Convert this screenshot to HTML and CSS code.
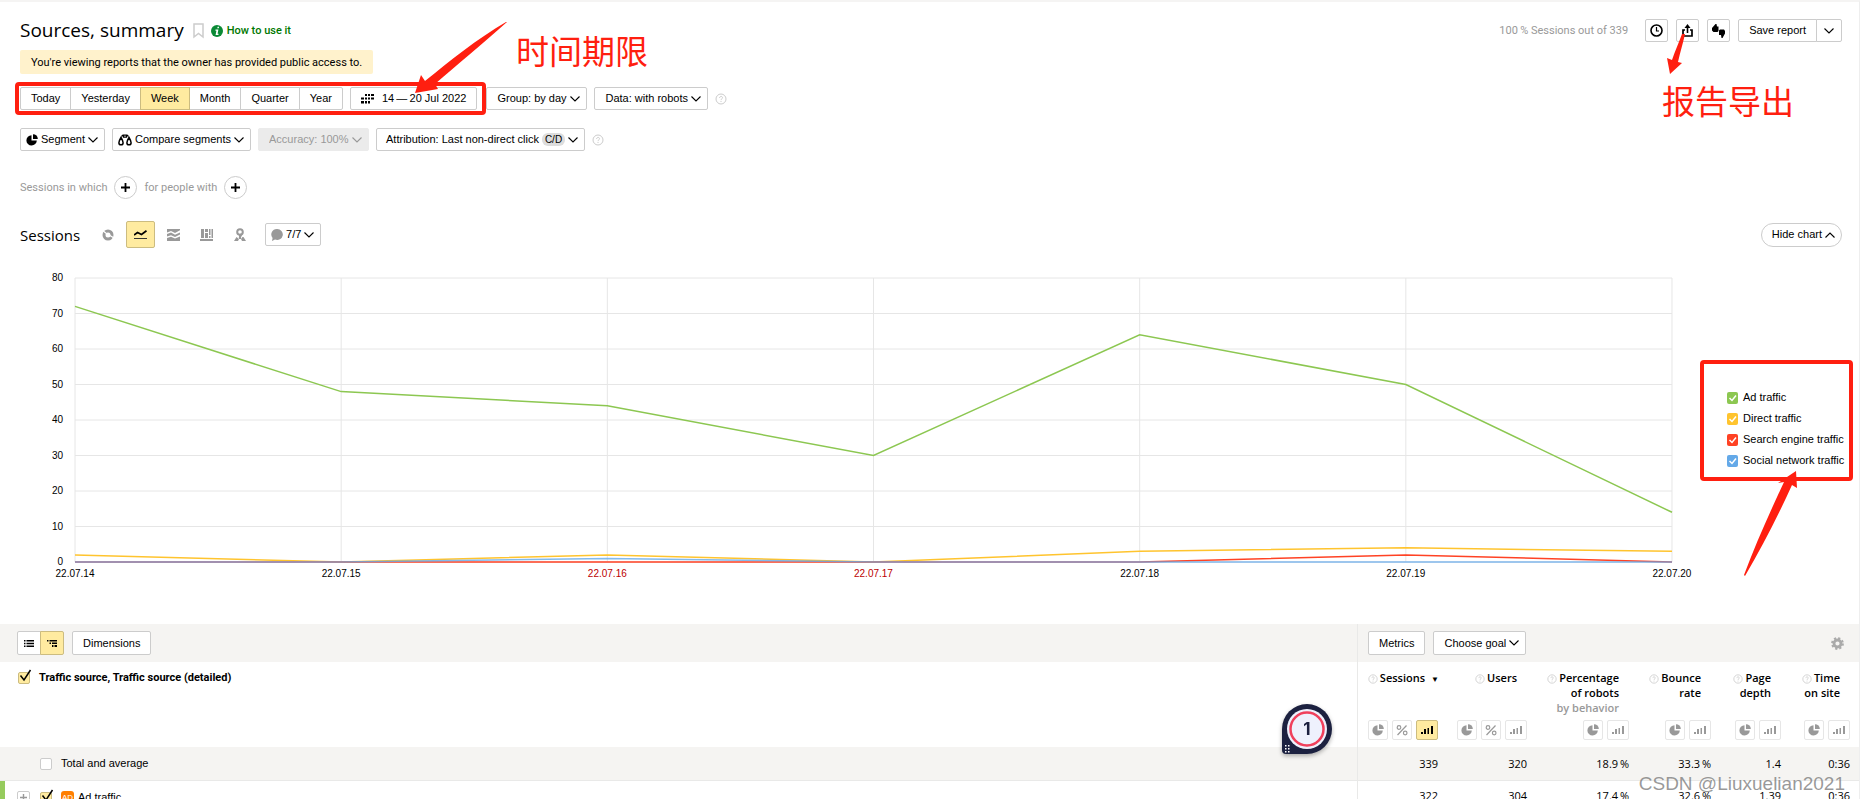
FILE: index.html
```html
<!DOCTYPE html>
<html lang="en">
<head>
  <meta charset="utf-8">
  <title>Sources, summary</title>
  <link rel="stylesheet" href="styles.css">
</head>
<body>
  <!-- Shared icons -->
  <svg class="sprite" aria-hidden="true">
    <symbol id="i-chevron" viewBox="0 0 10 6"><path d="M.5.5 5 5 9.500.5" fill="none" stroke="currentColor" stroke-width="1.100"/></symbol>
    <symbol id="i-help" viewBox="0 0 12 12"><circle cx="6" cy="6" r="5" fill="none" stroke="currentColor"/><path d="M4.600 4.900c0-2 2.900-1.900 2.900-.2C7.500 5.900 6 5.900 6 7.100M6 8v1" fill="none" stroke="currentColor"/></symbol>
    <symbol id="i-pie" viewBox="0 0 12 12"><path d="M5.500 1.200V6.500H10.800A5.200 5.200 0 1 1 5.500 1.200Z" fill="currentColor"/><path d="M7 .2A4.800 4.800 0 0 1 11.800 5H7Z" fill="currentColor"/></symbol>
    <symbol id="i-percent" viewBox="0 0 12 12"><path d="M10.500 1.500 1.500 11" fill="none" stroke="currentColor" stroke-width="1.200"/><circle cx="3" cy="3.500" r="1.800" fill="none" stroke="currentColor" stroke-width="1.200"/><circle cx="9.200" cy="9" r="1.800" fill="none" stroke="currentColor" stroke-width="1.200"/></symbol>
    <symbol id="i-bars" viewBox="0 0 12 12"><path d="M0 8h2v2H0zM3 5h2v5H3zM6.500 4h1.500v6H6.500zM10 2h2v8h-2z" fill="currentColor"/></symbol>
    <symbol id="i-plus" viewBox="0 0 10 10"><path d="M5 0v10M0 5h10" stroke="currentColor" stroke-width="2"/></symbol>
  </svg>

  <div class="page">
    <header class="header">
      <h1>Sources, summary</h1>
      <svg class="bookmark" viewBox="0 0 11 16"><path d="M1 1h9v13L5.500 10.500 1 14Z" fill="none" stroke="#ccc" stroke-width="1.500"/></svg>
      <a class="how-to" href="#">
        <svg width="12" height="12" viewBox="0 0 12 12"><circle cx="6" cy="6" r="6" fill="#0a8a35"/><path d="M6.600 1.800h1.500L7.800 3.300H6.300zM4.500 4.400h2.900L6.600 8.800h1L7.400 10H4.600l.8-4.300h-1z" fill="#fff"/></svg>
        How to use it
      </a>
      <div class="header-right">
        <span class="sampling">100&thinsp;% Sessions out of 339</span>
        <button class="btn icon-btn" aria-label="History"><svg width="13" height="13" viewBox="0 0 13 13"><circle cx="6.500" cy="6.500" r="5.500" fill="none" stroke="#000" stroke-width="1.600"/><path d="M6.500 3v4H9" fill="none" stroke="#000" stroke-width="1.200"/></svg></button>
        <button class="btn icon-btn" aria-label="Export"><svg width="11" height="13" viewBox="0 0 11 13"><path d="M3 6H1v6h9V6H8" fill="none" stroke="#000" stroke-width="1.700"/><path d="M5.500 9V2" stroke="#000" stroke-width="1.600"/><path d="M2.500 4 5.500 0l3 4z"/></svg></button>
        <button class="btn icon-btn" aria-label="Feedback"><svg width="14" height="14" viewBox="0 0 14 14"><path d="M3.500 0 4.500 0 5 2.500H6.500V7L5.500 8H1.500L0 6.500V4ZM10.500 14 9.500 14 9 11H7V6.500L8 5.500H12L13 7V9.500Z"/></svg></button>
        <div class="btn-group">
          <button class="btn">Save report</button><button class="btn arrow-btn" aria-label="More save options"><svg class="chevron"><use href="#i-chevron"/></svg></button>
        </div>
      </div>

      <div class="note-export">
        <svg width="20" height="41" viewBox="0 0 20 41"><path d="M19 0 17 0C14 8 10 17 7 26L2 24 5 40 17 29 13 28C15 19 18 9 20 0Z"/></svg>
        <span>报告导出</span>
      </div>
    </header>

    <p class="notice">You're viewing reports that the owner has provided public access to.</p>

    <div class="toolbar">
      <div class="btn-group">
        <button class="btn">Today</button><button class="btn">Yesterday</button><button class="btn active">Week</button><button class="btn">Month</button><button class="btn">Quarter</button><button class="btn">Year</button>
      </div>
      <button class="btn date">
        <svg width="13" height="10" viewBox="0 0 13 10"><path d="M4 0h2v2H4zM7 0h2v2H7zM10 0h3v2h-3zM0 3.500h3v2H0zM4 3.500h2v2H4zM7 3.500h2v2H7zM10 3.500h3v2h-3zM0 7h3v2.500H0zM4 7h2v2.500H4zM7 7h2v2.500H7z"/></svg>
        14&thinsp;—&thinsp;20 Jul 2022
      </button>
      <select class="btn select" aria-label="Group"><option>Group: by day</option></select>
      <select class="btn select" aria-label="Data"><option>Data: with robots</option></select>
      <svg class="help"><use href="#i-help"/></svg>

      <div class="note-frame"></div>
      <svg class="note-arrow" width="93" height="73" viewBox="0 0 93 73"><path d="M92 0C66 23 42 43 20 62L23 67 0 71 6 53 10 59C36 38 62 17 91 0Z"/></svg>
      <span class="note-period">时间期限</span>
    </div>

    <div class="toolbar second">
      <button class="btn with-icon"><svg width="12" height="12"><use href="#i-pie"/></svg>Segment<svg class="chevron"><use href="#i-chevron"/></svg></button>
      <button class="btn with-icon"><svg width="14" height="12" viewBox="0 0 14 12"><path d="M3 3.500C1.500 6 .9 7.300.9 8.700a2.100 2.100 0 0 0 4.200 0C5.100 7.300 4.500 6 3 3.500ZM11 3.500C9.500 6 8.900 7.300 8.900 8.700a2.100 2.100 0 0 0 4.200 0C13.100 7.300 12.500 6 11 3.500Z" fill="none" stroke="#000" stroke-width="1.500"/><path d="M3.500 2.500 5 1M9 1l1.500 1.500M5.500 1.200h3v2h-3z" fill="none" stroke="#000" stroke-width="1.200"/></svg>Compare segments<svg class="chevron"><use href="#i-chevron"/></svg></button>
      <select class="btn select" aria-label="Accuracy" disabled><option>Accuracy: 100%</option></select>
      <button class="btn attribution">Attribution: Last non-direct click<span class="tag">C/D</span><svg class="chevron"><use href="#i-chevron"/></svg></button>
      <svg class="help"><use href="#i-help"/></svg>
    </div>

    <div class="filters">
      <span>Sessions in which</span>
      <button class="round" aria-label="Add session condition"><svg><use href="#i-plus"/></svg></button>
      <span>for people with</span>
      <button class="round" aria-label="Add people condition"><svg><use href="#i-plus"/></svg></button>
    </div>

    <div class="chart-head">
      <h2>Sessions</h2>
      <div class="chart-types">
        <button aria-label="Pie"><svg width="12" height="12" viewBox="0 0 12 12"><circle cx="6" cy="6" r="4" fill="none" stroke="#999" stroke-width="3"/><path d="M5 5 0 1M7 6l5 3" stroke="#fff" stroke-width="1.200"/></svg></button>
        <button class="active" aria-label="Lines"><svg width="13" height="10" viewBox="0 0 13 10"><path d="M0 5 3.500 2.500 7.500 4.500 12.500.8" fill="none" stroke="#000" stroke-width="1.700"/><path d="M0 8.500h13" stroke="#333"/></svg></button>
        <button aria-label="Areas"><svg width="13" height="12" viewBox="0 0 13 12"><path d="M0 0h13v1.200L8 4 4 2 0 3.500ZM0 5 4 3.500 8 5.700 13 3.500V5.500L8 8 4 6.200 0 7.500ZM0 9 4 7.700 8 9.500 13 7.500V12H0Z" fill="#999"/></svg></button>
        <button aria-label="Columns"><svg width="13" height="12" viewBox="0 0 13 12"><path d="M1 0h3v9H1zM5 0h3v3H5zM5 4h3v5H5zM9 0h1.500v6H9zM9 7h1.500v2H9zM11.500 0H13v9h-1.500zM0 10h13v2H0z" fill="#999"/></svg></button>
        <button aria-label="Map"><svg width="12" height="13" viewBox="0 0 12 13"><path d="M6 4.500V11" stroke="#999" stroke-width="2"/><circle cx="6" cy="4" r="2.800" fill="#fff" stroke="#999" stroke-width="2"/><path d="M7.500 6 5.500 10" stroke="#999" stroke-width="2"/><path d="M2.500 9 0 13h4l1-2ZM8.500 9 7 11 8 13h4L9.500 9Z" fill="#999"/></svg></button>
      </div>
      <button class="btn with-icon notes-btn"><svg width="12" height="12" viewBox="0 0 12 12"><path d="M6 0a5.700 5.500 0 1 1-2 10.600L1 12l.6-3A5.600 5.500 0 0 1 6 0Z" fill="#999"/></svg>7/7<svg class="chevron"><use href="#i-chevron"/></svg></button>
      <button class="hide-chart">Hide chart<svg class="chevron up"><use href="#i-chevron"/></svg></button>
    </div>

    <div class="chart">
      <div class="y-axis">
        <span>80</span><span>70</span><span>60</span><span>50</span><span>40</span><span>30</span><span>20</span><span>10</span><span>0</span>
      </div>
      <div class="plot">
        <!-- x: day number, y: 80 minus sessions -->
        <svg viewBox="0 0 6 80" preserveAspectRatio="none">
          <path class="grid" d="M0 0H6M0 10H6M0 20H6M0 30H6M0 40H6M0 50H6M0 60H6M0 70H6M0 80H6M0 0V80M1 0V80M2 0V80M3 0V80M4 0V80M5 0V80M6 0V80"/>
          <polyline class="ad" points="0,8 1,32 2,36 3,50 4,16 5,30 6,66"/>
          <polyline class="direct" points="0,78 1,80 2,78 3,80 4,77 5,76 6,77"/>
          <polyline class="search" points="0,80 1,80 2,80 3,80 4,80 5,78 6,80"/>
          <polyline class="social" points="0,80 1,80 2,79 3,80 4,80 5,80 6,80"/>
        </svg>
        <div class="x-axis">
          <span>22.07.14</span><span>22.07.15</span><span class="weekend">22.07.16</span><span class="weekend">22.07.17</span><span>22.07.18</span><span>22.07.19</span><span>22.07.20</span>
        </div>
      </div>
      <div class="legend">
        <label class="c-ad"><input type="checkbox" checked>Ad traffic</label>
        <label class="c-direct"><input type="checkbox" checked>Direct traffic</label>
        <label class="c-search"><input type="checkbox" checked>Search engine traffic</label>
        <label class="c-social"><input type="checkbox" checked>Social network traffic</label>
        <svg class="legend-arrow" width="54" height="106" viewBox="0 0 54 106"><path d="M0 104C12 72 26 41 40 11L34 12 52 0 53 17 48 14C34 45 18 76 1 105Z"/></svg>
      </div>
    </div>

    <div class="table-bar">
      <div class="bar-left">
        <div class="btn-group">
          <button class="btn view-btn" aria-label="List"><svg width="10" height="7" viewBox="0 0 10 7"><path d="M0 0h1.500v1.500H0zM2.500 0H10v1.500H2.500zM0 2.700h1.500v1.500H0zM2.500 2.700H10v1.500H2.500zM0 5.400h1.500V7H0zM2.500 5.400H10V7H2.500z"/></svg></button><button class="btn view-btn active" aria-label="Tree"><svg width="10" height="7" viewBox="0 0 10 7"><path d="M0 0h1.500v1.500H0zM2.500 0H10v1.500H2.500zM2.500 2.500h1.500V4H2.500zM5 2.500h5V4H5zM5 5h1.500v2H5zM7.500 5H10v2H7.500z"/></svg></button>
        </div>
        <button class="btn">Dimensions</button>
      </div>
      <div class="bar-right">
        <button class="btn">Metrics</button>
        <select class="btn select" aria-label="Goal"><option>Choose goal</option></select>
        <button class="gear" aria-label="Settings"><svg width="13" height="13" viewBox="0 0 13 13"><circle cx="6.500" cy="6.500" r="3.500" fill="none" stroke="#aaa" stroke-width="2.800"/><circle cx="6.500" cy="6.500" r="5.400" fill="none" stroke="#aaa" stroke-width="2" stroke-dasharray="2.200 2.040"/></svg></button>
      </div>
      <svg class="recorder" width="60" height="60" viewBox="0 0 60 60">
        <path d="M30 5A25 25 0 1 1 30 55H9a4 4 0 0 1-4-4V30A25 25 0 0 1 30 5Z" fill="#1c2140"/>
        <circle cx="30" cy="30" r="20" fill="#eef1fd"/>
        <circle cx="30" cy="30" r="16.500" fill="none" stroke="#f0405c" stroke-width="2.500"/>
        <path d="M8 46h1.500v1.500H8zM11 46h1.500v1.500H11zM8 49h1.500v1.500H8zM11 49h1.500v1.500H11zM8 52h1.500v1.500H8zM11 52h1.500v1.500H11z" fill="#fff"/>
        <text x="30" y="36" text-anchor="middle">1</text>
      </svg>
    </div>

    <table>
      <colgroup>
        <col><col class="w-sessions"><col class="w-users"><col class="w-robots"><col class="w-bounce"><col class="w-depth"><col class="w-time">
      </colgroup>
      <thead>
        <tr class="titles">
          <th class="source"><label><input type="checkbox" class="tick" checked>Traffic source, Traffic source (detailed)</label></th>
          <th class="sorted"><svg class="help"><use href="#i-help"/></svg>Sessions<span class="sort">▼</span></th>
          <th><svg class="help"><use href="#i-help"/></svg>Users</th>
          <th><svg class="help"><use href="#i-help"/></svg>Percentage<br>of robots<br><span class="sub">by behavior</span></th>
          <th><svg class="help"><use href="#i-help"/></svg>Bounce<br>rate</th>
          <th><svg class="help"><use href="#i-help"/></svg>Page<br>depth</th>
          <th><svg class="help"><use href="#i-help"/></svg>Time<br>on site</th>
        </tr>
        <tr class="modes">
          <td></td>
          <td><div><button aria-label="Pie"><svg><use href="#i-pie"/></svg></button><button aria-label="Percent"><svg><use href="#i-percent"/></svg></button><button class="wide active" aria-label="Bars"><svg><use href="#i-bars"/></svg></button></div></td>
          <td><div><button aria-label="Pie"><svg><use href="#i-pie"/></svg></button><button aria-label="Percent"><svg><use href="#i-percent"/></svg></button><button class="wide" aria-label="Bars"><svg><use href="#i-bars"/></svg></button></div></td>
          <td><div><button aria-label="Pie"><svg><use href="#i-pie"/></svg></button><button class="wide" aria-label="Bars"><svg><use href="#i-bars"/></svg></button></div></td>
          <td><div><button aria-label="Pie"><svg><use href="#i-pie"/></svg></button><button class="wide" aria-label="Bars"><svg><use href="#i-bars"/></svg></button></div></td>
          <td><div><button aria-label="Pie"><svg><use href="#i-pie"/></svg></button><button class="wide" aria-label="Bars"><svg><use href="#i-bars"/></svg></button></div></td>
          <td><div><button aria-label="Pie"><svg><use href="#i-pie"/></svg></button><button class="wide" aria-label="Bars"><svg><use href="#i-bars"/></svg></button></div></td>
        </tr>
      </thead>
      <tbody>
        <tr class="total">
          <td class="source"><label><input type="checkbox" class="tick">Total and average</label></td>
          <td>339</td><td>320</td><td>18.9&thinsp;%</td><td>33.3&thinsp;%</td><td>1.4</td><td>0:36</td>
        </tr>
        <tr class="item">
          <td class="source"><div class="item-name"><button class="expand" aria-label="Expand"><svg><use href="#i-plus"/></svg></button><label><input type="checkbox" class="tick" checked><span class="ad-icon">AD</span>Ad traffic</label></div></td>
          <td>322</td><td>304</td><td>17.4&thinsp;%</td><td>32.6&thinsp;%</td><td>1.39</td><td>0:36</td>
        </tr>
      </tbody>
    </table>
    <div class="watermark">CSDN @Liuxuelian2021</div>
  </div>
</body>
</html>
```

FILE: styles.css
```css
* {
  box-sizing: border-box;
}

body {
  margin: 0;
  height: 100vh;
  overflow: hidden;
  background: #fff;
  color: #000;
  font: 11px/15px Roboto, "Noto Sans", sans-serif;
}

h1, h2, p {
  margin: 0;
  font-weight: normal;
}

button, select {
  margin: 0;
  padding: 0;
  border: none;
  background: none;
  color: #000;
  font: 11px/15px "Liberation Sans", Arial, sans-serif;
  cursor: pointer;
}

.sprite {
  position: absolute;
  width: 0;
  height: 0;
}

.page {
  position: relative;
  height: 100vh;
  overflow: hidden;
  border-top: 2px solid #f5f4f3;
  border-right: 1px solid #eee;
}

/* Buttons */
.btn {
  display: inline-flex;
  align-items: center;
  height: 23px;
  padding: 0 10px;
  border: 1px solid #ccc;
  border-radius: 2px;
  background: #fff;
  white-space: nowrap;
}

.active {
  background: #ffeba0;
}

.btn.active {
  border-color: #ccbc80;
  background: #ffeba0;
  position: relative;
}

.btn-group {
  display: flex;
}

.btn-group .btn {
  border-radius: 0;
}

.btn-group .btn + .btn {
  margin-left: -1px;
}

.btn-group .btn:first-child {
  border-radius: 2px 0 0 2px;
}

.btn-group .btn:last-child {
  border-radius: 0 2px 2px 0;
}

.chevron {
  width: 10px;
  height: 6px;
  margin-left: 3px;
}

.chevron.up {
  transform: rotate(180deg);
}

.select {
  display: inline-block;
  appearance: none;
  padding-right: 19px;
  background: #fff url("data:image/svg+xml,%3Csvg xmlns='http://www.w3.org/2000/svg' width='10' height='6'%3E%3Cpath d='M.5.5 5 5 9.500.5' fill='none' stroke='%23000' stroke-width='1.100'/%3E%3C/svg%3E") no-repeat right 6px center;
}

.select:disabled {
  border-color: #ebebeb;
  background-color: #ebebeb;
  background-image: url("data:image/svg+xml,%3Csvg xmlns='http://www.w3.org/2000/svg' width='10' height='6'%3E%3Cpath d='M.5.5 5 5 9.500.5' fill='none' stroke='%23999' stroke-width='1.100'/%3E%3C/svg%3E");
  color: #999;
  opacity: 1;
}

.icon-btn {
  width: 23px;
  padding: 0;
  justify-content: center;
}

.with-icon {
  padding: 0 6px 0 5px;
  gap: 3px;
}

.with-icon .chevron {
  margin-left: 0;
}

.help {
  width: 12px;
  height: 12px;
  color: #ccc;
}

/* Header */
.header {
  position: relative;
  display: flex;
  align-items: center;
  height: 23px;
  margin: 17px 17px 0 20px;
}

.header h1 {
  font: 19px/23px "Open Sans", "Noto Sans", sans-serif;
}

.bookmark {
  width: 11px;
  height: 16px;
  margin-left: 9px;
}

.how-to {
  display: flex;
  align-items: center;
  gap: 4px;
  margin-left: 7px;
  color: #070;
  font-weight: 500;
  text-decoration: none;
}

.header-right {
  display: flex;
  align-items: center;
  gap: 8px;
  margin-left: auto;
}

.sampling {
  margin-right: 9px;
  color: #999;
}

.arrow-btn {
  padding: 0 7px;
}

.arrow-btn .chevron {
  margin: 0;
}

.notice {
  display: table;
  margin: 8px 0 13px 20px;
  padding: 5px 11px 4px;
  border-radius: 2px;
  background: #fff2cc;
}

/* Report settings */
.toolbar {
  position: relative;
  display: flex;
  align-items: center;
  gap: 7px;
  height: 23px;
  padding-left: 20px;
}

.toolbar.second {
  margin-top: 18px;
}

.toolbar .date {
  gap: 8px;
  margin-right: 2px;
}

.toolbar .attribution {
  padding: 0 6px 0 9px;
}

.tag {
  margin-left: 3px;
  padding: 0 3px;
  border-radius: 6px;
  background: #ddd;
  font-size: 10px;
  line-height: 13px;
}

.filters {
  display: flex;
  align-items: center;
  gap: 7px;
  height: 24px;
  margin: 24px 20px 22px;
  color: #999;
}

.round {
  display: flex;
  align-items: center;
  justify-content: center;
  width: 23px;
  height: 23px;
  border: 1px solid #ccc;
  border-radius: 50%;
}

.round svg {
  width: 9px;
  height: 9px;
}

/* Red marks */
.note-export, .note-period {
  color: #ff1f10;
  font: 33px/40px "Noto Sans CJK SC", sans-serif;
  white-space: nowrap;
}

.note-export svg, .note-arrow, .legend-arrow {
  fill: #ff1f10;
}

.note-export {
  position: absolute;
  top: 15px;
  right: 48px;
}

.note-export svg {
  display: block;
  margin: 0 0 5px 3px;
}

.note-period {
  position: absolute;
  left: 516px;
  top: -57px;
}

.note-frame {
  position: absolute;
  left: 15px;
  top: -5px;
  width: 471px;
  height: 33px;
  border: 4px solid #ff1f10;
  border-radius: 4px;
}

.note-arrow {
  position: absolute;
  left: 415px;
  top: -65px;
}

/* Chart */
.chart-head {
  display: flex;
  align-items: center;
  height: 27px;
  margin: 0 17px 30px 20px;
}

.chart-head h2 {
  font: 15px/20px "Open Sans", "Noto Sans", sans-serif;
}

.chart-types {
  display: flex;
  gap: 4px;
  margin-left: 13px;
}

.chart-types button {
  display: flex;
  align-items: center;
  justify-content: center;
  width: 29px;
  height: 27px;
  border-radius: 2px;
}

.chart-types .active {
  border: 1px solid #ccbc80;
  background: #ffeba0;
}

.notes-btn {
  margin-left: 11px;
}

.hide-chart {
  height: 24px;
  margin-left: auto;
  padding: 0 6px 0 10px;
  border: 1px solid #ccc;
  border-radius: 12px;
}

.chart {
  display: flex;
  height: 346px;
}

.y-axis {
  display: flex;
  flex-direction: column;
  justify-content: space-between;
  width: 63px;
  height: 298px;
  margin: -7px 12px 0 0;
  text-align: right;
}

.y-axis, .x-axis {
  font: 10px/14px "Liberation Sans", Arial, sans-serif;
}

.plot {
  flex: 1;
}

.plot svg {
  display: block;
  width: 100%;
  height: 284px;
  overflow: visible;
  fill: none;
}

.plot path, .plot polyline {
  vector-effect: non-scaling-stroke;
  stroke-width: 1.500px;
}

.plot .grid {
  stroke: #e6e6e6;
  stroke-width: 1px;
  shape-rendering: crispEdges;
}

.ad { stroke: #8cc751; }
.direct { stroke: #ffc42e; }
.search { stroke: #ff4224; }
.social { stroke: #64a9e8; stroke-opacity: 0.8; }

.x-axis {
  display: flex;
  justify-content: space-between;
  margin: 5px -30px 0;
}

.x-axis span {
  width: 60px;
  text-align: center;
}

.x-axis .weekend {
  color: #b00;
}

.legend {
  position: relative;
  display: flex;
  flex-direction: column;
  gap: 6px;
  width: 153px;
  height: 121px;
  margin: 82px 6px 0 28px;
  padding: 26px 0 0 23px;
  border: 4px solid #ff1f10;
  border-radius: 4px;
  font: 11px/15px "Liberation Sans", Arial, sans-serif;
  white-space: nowrap;
}

.legend label {
  display: flex;
  align-items: center;
  gap: 5px;
}

.legend input {
  appearance: none;
  width: 11px;
  height: 12px;
  margin: 0;
  border-radius: 2px;
  background: url("data:image/svg+xml,%3Csvg xmlns='http://www.w3.org/2000/svg' width='11' height='12'%3E%3Cpath d='M2.500 6 5 8.500 9 3.500' fill='none' stroke='%23fff' stroke-width='1.500'/%3E%3C/svg%3E");
}

.c-ad input { background-color: #8cc751; }
.c-direct input { background-color: #ffc42e; }
.c-search input { background-color: #ff4224; }
.c-social input { background-color: #64a9e8; }

.legend-arrow {
  position: absolute;
  left: 40px;
  top: 107px;
}

/* Table toolbar */
.table-bar {
  position: relative;
  display: flex;
  height: 38px;
  background: #f5f4f2;
}

.table-bar .btn {
  height: 24px;
}

.bar-left, .bar-right {
  display: flex;
  align-items: center;
  gap: 8px;
}

.bar-left {
  flex: 1;
  padding-left: 17px;
}

.bar-right {
  width: 502px;
  padding: 0 15px 0 10px;
  border-left: 1px solid #e9e9e8;
}

.view-btn {
  width: 24px;
  padding: 0;
  justify-content: center;
}

.gear {
  margin-left: auto;
}

.gear svg {
  display: block;
}

.recorder {
  position: absolute;
  right: 522px;
  top: 75px;
  filter: drop-shadow(0 2px 2px rgba(0, 0, 0, 0.3));
}

.recorder text {
  fill: #1c2140;
  font: bold 17px Inter, sans-serif;
}

/* Table */
table {
  width: 100%;
  table-layout: fixed;
  border-spacing: 0;
}

.w-sessions { width: 90px; }
.w-users { width: 89px; }
.w-robots { width: 102px; }
.w-bounce { width: 82px; }
.w-depth { width: 70px; }
.w-time { width: 69px; }

th, td {
  padding: 0 9px 0 0;
  font-family: "Open Sans", "Noto Sans", sans-serif;
  text-align: right;
  white-space: nowrap;
}

th:nth-child(2), td:nth-child(2) {
  border-left: 1px solid #e9e9e8;
}

.titles th {
  height: 58px;
  padding: 8px 19px 0 0;
  font-weight: 600;
  vertical-align: top;
}

.titles th.sorted {
  padding-right: 8px;
}

.titles .help {
  width: 10px;
  height: 10px;
  margin-right: 2px;
  vertical-align: -2px;
}

.sort {
  margin-left: 6px;
  font-size: 8px;
}

.sub {
  color: #999;
}

.modes td {
  height: 27px;
  vertical-align: top;
}

.modes div {
  display: flex;
  justify-content: flex-end;
  gap: 4px;
}

.modes button {
  display: flex;
  align-items: center;
  justify-content: center;
  width: 20px;
  height: 20px;
  border: 1px solid #e6e6e6;
  border-radius: 2px;
  color: #999;
}

.modes svg {
  width: 12px;
  height: 12px;
}

.modes .wide {
  width: 22px;
}

.modes .active {
  border-color: #ccbc80;
  color: #000;
}

.total td {
  height: 34px;
  background: #f5f4f2;
  border-bottom: 1px solid #e9e9e8;
}

.source {
  text-align: left;
}

.source label {
  display: flex;
  align-items: center;
  gap: 9px;
}

.titles th.source {
  padding: 8px 0 0 18px;
  font-family: Roboto, "Noto Sans", sans-serif;
  font-weight: bold;
  text-align: left;
}

.total .source {
  padding-left: 40px;
  font-family: "Liberation Sans", Arial, sans-serif;
  text-align: left;
}

.tick {
  appearance: none;
  position: relative;
  width: 12px;
  height: 12px;
  margin: 0;
  border: 1px solid #ccc;
  border-radius: 2px;
  background: #fff;
}

.tick:checked {
  border-color: #ccbc80;
  background: #ffeba0;
}

.tick:checked::after {
  content: "";
  position: absolute;
  left: 0;
  top: -4px;
  width: 13px;
  height: 13px;
  background: url("data:image/svg+xml,%3Csvg xmlns='http://www.w3.org/2000/svg' width='13' height='13'%3E%3Cpath d='M1.500 6.500 5 11 11.500 1' fill='none' stroke='%23000' stroke-width='1.500'/%3E%3C/svg%3E");
}

.item td {
  height: 29px;
}

.item .source {
  border-left: 5px solid #96cb5d;
  padding: 4px 0 0 12px;
  font-family: "Liberation Sans", Arial, sans-serif;
}

.item-name {
  display: flex;
  align-items: center;
  gap: 10px;
}

.expand {
  display: flex;
  align-items: center;
  justify-content: center;
  width: 13px;
  height: 13px;
  border: 1px solid #ccc;
  border-radius: 2px;
  color: #999;
}

.expand svg {
  width: 7px;
  height: 7px;
}

.ad-icon {
  width: 13px;
  margin-right: -5px;
  border-radius: 3px;
  background: #ff7f00;
  color: #fff;
  font-size: 8px;
  line-height: 13px;
  text-align: center;
}

.watermark {
  position: absolute;
  right: 14px;
  bottom: 3px;
  color: rgba(120, 120, 120, 0.75);
  font: 19px/24px "Liberation Sans", Arial, sans-serif;
}
```
